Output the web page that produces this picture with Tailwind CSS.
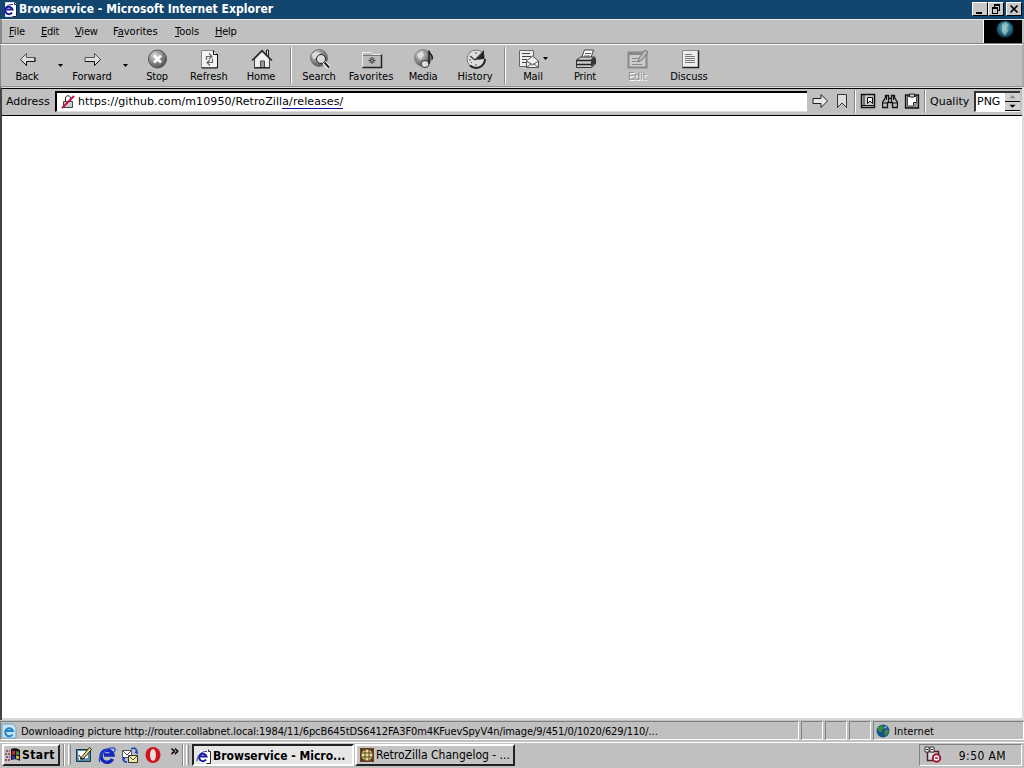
<!DOCTYPE html>
<html lang="en">
<head>
  <meta charset="UTF-8" />
  <meta name="viewport" content="width=device-width, initial-scale=1.0"/>
  <title>Browservice - Microsoft Internet Explorer</title>
  <script src="https://cdn.jsdelivr.net/npm/@tailwindcss/browser@4"></script>
</head>

<body class="w-[1024px] h-[768px] overflow-hidden flex flex-col bg-[#c0c0c0] text-black text-[11px] leading-[13px] whitespace-nowrap font-['DejaVu_Sans_Condensed','DejaVu_Sans',sans-serif]">

  <!-- shared icons -->
  <svg class="absolute w-0 h-0">
    <defs>
      <radialGradient id="ball" cx=".35" cy=".3" r=".8"><stop offset="0" stop-color="#ddd"/><stop offset=".4" stop-color="#999"/><stop offset="1" stop-color="#444"/></radialGradient>
      <radialGradient id="earth" cx=".5" cy=".4" r=".6"><stop offset="0" stop-color="#7cc4d8"/><stop offset=".5" stop-color="#2d7796"/><stop offset="1" stop-color="#0a2436"/></radialGradient>
    </defs>
    <symbol id="ie-page" viewBox="0 0 16 16">
      <path d="M3.500 1.500h9l2 2v12h-11z" fill="#fff" stroke="#dde"/>
      <path d="M12.500 1.500v2h2v12h-4" fill="none" stroke="#223"/>
      <path d="M10 11.500a3.700 3.700 0 1 1 .5-3H4.500" fill="none" stroke="#1c1c9c" stroke-width="2"/>
      <path d="M1 13C1 8 5 3 11 3.500" fill="none" stroke="#2233a8"/>
    </symbol>
    <symbol id="arrow" viewBox="0 0 16 14">
      <path d="M1 4.500h8v-4l6.500 6.500L9 13.500v-4H1z" fill="#e8e8e8" stroke="#222"/>
    </symbol>
  </svg>

  <!-- title bar -->
  <header class="h-[19px] shrink-0 flex items-center bg-[#12466f] text-white pl-[2px] pr-[2px] pb-px">
    <svg class="w-4 h-4"><use href="#ie-page"/></svg>
    <span class="ml-px pt-px text-[12px] font-bold tracking-[0.05px]">Browservice - Microsoft Internet Explorer</span>
    <div class="ml-auto flex text-black">
      <div class="w-4 h-3.5 bg-[#c8c8c8] border border-t-white border-l-white border-r-black border-b-black">
        <svg class="w-3.5 h-3" viewBox="0 0 14 12"><path d="M3 9h6v2H3z"/></svg>
      </div>
      <div class="w-4 h-3.5 bg-[#c8c8c8] border border-t-white border-l-white border-r-black border-b-black">
        <svg class="w-3.5 h-3" viewBox="0 0 14 12"><path d="M5 1h6v2H5zM3 4h6v2H3zM5 3h1v1H5zM10 3h1v5h-1zM9 7h1v1H9zM3 6h1v5H3zM8 6h1v5H8zM4 10h4v1H4z"/></svg>
      </div>
      <div class="ml-[2px] w-4 h-3.5 bg-[#c8c8c8] border border-t-white border-l-white border-r-black border-b-black">
        <svg class="w-3.5 h-3" viewBox="0 0 14 12"><path d="M3.500 2.500l7 7M10.500 2.500l-7 7" stroke="#000" stroke-width="1.700"/></svg>
      </div>
    </div>
  </header>

  <!-- menu bar -->
  <nav class="h-[25px] shrink-0 flex border-t border-t-[#e8e8e8] border-b border-b-[#808080] border-l-2 border-l-[#888] pr-[2px]">
    <div class="flex pt-[5px] pl-[7px]">
      <span class="w-[32px] tracking-[-0.1px]"><u>F</u>ile</span>
      <span class="w-[34px] tracking-[-0.3px]"><u>E</u>dit</span>
      <span class="w-[38px] tracking-[-0.2px]"><u>V</u>iew</span>
      <span class="w-[62px]">F<u>a</u>vorites</span>
      <span class="w-[40px]"><u>T</u>ools</span>
      <span class="tracking-[-0.3px]"><u>H</u>elp</span>
    </div>
    <div class="ml-auto w-[39px] h-[23px] bg-black border-l border-white flex justify-center">
      <svg class="w-6 h-[22px] ml-1" viewBox="0 0 24 22"><circle cx="12" cy="9.500" r="8.500" fill="url(#earth)"/><path d="M9 4l4-2 3 3-3 3 2 3-3 5-3-4z" fill="#c4dcc0" opacity=".55"/></svg>
    </div>
  </nav>

  <!-- standard buttons -->
  <div class="h-[43px] shrink-0 flex border-t border-t-white border-b border-b-[#909090] border-l border-l-[#888] border-r-2 border-r-[#aaa] [&>div]:w-[52px] [&>div]:flex [&>div]:flex-col [&>div]:items-center [&>div]:pt-[3px] [&>div>svg]:w-6 [&>div>svg]:h-[22px] [&>i]:w-[13px] [&>i]:pt-[19px] [&>i]:pl-[5px]">
    <div><svg viewBox="0 0 24 22"><path d="M5.500 11.500l6-6v4H20v4h-8.500v4z" fill="#ddd" stroke="#555"/><path d="M5.500 11.500l6 6v-4H20v-4" fill="none" stroke="#111"/></svg><span class="tracking-[-0.3px]">Back</span></div>
    <i><svg class="w-[5px] h-[3px]" viewBox="0 0 5 3"><path d="M0 0h5L2.500 3z"/></svg></i>
    <div><svg viewBox="0 0 24 22"><path d="M20.500 11.500l-6-6v4H5v4h9.500v4z" fill="#ddd" stroke="#555"/><path d="M20.500 11.500l-6 6v-4H5" fill="none" stroke="#111"/></svg><span>Forward</span></div>
    <i><svg class="w-[5px] h-[3px]" viewBox="0 0 5 3"><path d="M0 0h5L2.500 3z"/></svg></i>
    <div><svg viewBox="0 0 24 22"><circle cx="12.500" cy="11" r="9" fill="url(#ball)" stroke="#555"/><path d="M9 7.500l7 7M16 7.500l-7 7" stroke="#fff" stroke-width="2.500"/></svg><span class="tracking-[-0.2px]">Stop</span></div>
    <div><svg viewBox="0 0 24 22"><path d="M4.500 2.500h12l4 4v13h-16z" fill="#f4f4f4" stroke="#888"/><path d="M20.500 6v14h-16M16.500 2.500v4h4" fill="none" stroke="#111"/><path d="M9.500 12V8.500h5M12 5.500l3 3-3 2.500M15.500 10.500v4h-5M13 12l-3 2.500 3 3" fill="none" stroke="#666" stroke-width="1.200"/></svg><span class="tracking-[0.1px]">Refresh</span></div>
    <div><svg viewBox="0 0 24 22"><path d="M5.500 11v8.500h15V11L13 3.500z" fill="#eee" stroke="#444"/><path d="M17.500 7V2h2v7" fill="#ddd" stroke="#222"/><path d="M3 12.500L13 2.500l10 10" fill="none" stroke="#222" stroke-width="1.300"/><path d="M11.500 19v-6h4v6" fill="#999" stroke="#444"/><path d="M5 20h16" stroke="#111"/></svg><span class="tracking-[-0.2px]">Home</span></div>
    <b class="w-[6px] pl-[3px] py-[2px]"><b class="block w-[2px] h-full bg-[#888] border-r border-white"></b></b>
    <div><svg viewBox="0 0 24 22"><circle cx="12" cy="10" r="8.500" fill="url(#ball)" stroke="#777"/><path d="M5 6l4-2 4 1-2 4-5 2z" fill="#ddd"/><circle cx="14" cy="11" r="4.500" fill="#ddd" stroke="#222"/><path d="M17 14.500l5 5" stroke="#fff" stroke-width="4"/><path d="M17.500 14.500l4.500 5" stroke="#222" stroke-width="2"/></svg><span class="tracking-[-0.1px]">Search</span></div>
    <div><svg viewBox="0 0 24 22"><path d="M3.500 19.500V4.500h8l2 2h9v13z" fill="#bbb" stroke="#eee"/><path d="M4 7.500h18" stroke="#777"/><path d="M22.500 6.500v13h-19" fill="none" stroke="#222" stroke-width="1.500"/><path d="M13 9v7M9.500 12.500h7M10.500 10l5 5M15.500 10l-5 5" stroke="#333"/><path d="M12.500 12h1v1h-1z" fill="#fff"/></svg><span>Favorites</span></div>
    <div><svg viewBox="0 0 24 22"><circle cx="12" cy="10" r="8.500" fill="url(#ball)" stroke="#888"/><path d="M6 7l5-4 2 4-4 5z" fill="#ddd"/><ellipse cx="14" cy="16" rx="4" ry="3.500" fill="#ddd" stroke="#333"/><path d="M18 16V2.500c0 4 5 4 3 9" fill="none" stroke="#222" stroke-width="1.500"/></svg><span class="tracking-[-0.2px]">Media</span></div>
    <div><svg viewBox="0 0 24 22"><circle cx="13" cy="11" r="9" fill="#ddd" stroke="#777"/><path d="M22 11a9 9 0 0 1-15 6.500" fill="none" stroke="#222" stroke-width="2"/><path d="M12 12L21 2v9z" fill="#222"/><path d="M12 12L7 8M12 12l7-7" stroke="#444" stroke-width="1.500"/><path d="M13 4v2M6 12h2M13 16v2M8 15l1-1" stroke="#555"/></svg><span>History</span></div>
    <b class="w-[6px] pl-[3px] py-[2px]"><b class="block w-[2px] h-full bg-[#888] border-r border-white"></b></b>
    <div class="relative"><svg class="-ml-2" viewBox="0 0 24 22"><path d="M2.500 2.500h14v16h-14z" fill="#eee" stroke="#666"/><path d="M5 5.500h8M5 8.500h9M5 11.500h5M5 14.500h4" stroke="#444"/><path d="M9.500 13l6-5 6 5v6.500h-12z" fill="#eee" stroke="#555"/><path d="M9.500 13l6 4 6-4M9.500 19.500l5-4M21.500 19.500l-5-4" fill="none" stroke="#555"/></svg><span class="tracking-[-0.1px]">Mail</span>
      <em class="absolute left-[36px] top-[12px]"><svg class="w-[5px] h-[3px]" viewBox="0 0 5 3"><path d="M0 0h5L2.500 3z"/></svg></em></div>
    <div><svg viewBox="0 0 24 22"><path d="M8.500 10l3-8h9l-3 9z" fill="#fff" stroke="#444"/><path d="M12 5.500h6M11 8h6" stroke="#555"/><path d="M3.500 12l4-3h14l1 2v5l-4 3.500h-15z" fill="#ccc" stroke="#333"/><path d="M3.500 12.500h14l4-3M4 16.500h14" fill="none" stroke="#222" stroke-width="1.500"/><path d="M18 13l4-3v5.500L18 19z" fill="#333"/></svg><span class="tracking-[-0.1px]">Print</span></div>
    <div class="text-[#929292] [text-shadow:1px_1px_0_#fff]"><svg viewBox="0 0 24 22"><path d="M3.500 4.500h18v15h-18z" fill="#ccc" stroke="#888" stroke-width="2"/><path d="M4 6h12" stroke="#888" stroke-width="2"/><path d="M7 10.500h6M7 13.500h8M7 16.500h10" stroke="#888"/><path d="M13 14l1-4 6-8 3 2-6 8z" fill="#bbb" stroke="#777"/></svg><span class="tracking-[-0.3px]">Edit</span></div>
    <div><svg viewBox="0 0 24 22"><path d="M5.500 2.500h16v17h-16z" fill="#eee" stroke="#888"/><path d="M21.500 2.500v17h-16" fill="none" stroke="#222" stroke-width="1.500"/><path d="M8 6.500h7M8 8.500h10M8 10.500h10M8 12.500h10M8 14.500h10" stroke="#777"/></svg><span>Discuss</span></div>
  </div>

  <!-- address row drawn by the page -->
  <main class="h-[633px] shrink-0 flex flex-col border-t border-t-[#ddd] border-l-2 border-l-[#444] border-r-2 border-r-[#ddd] bg-white">
    <div class="h-[28px] shrink-0 flex items-center pb-[2px] border-t border-t-black border-b border-b-black bg-[#c0c0c0] font-['DejaVu_Sans',sans-serif]">
      <span class="w-[53px] pl-[4px]">Address</span>
      <div class="w-[752px] h-[21px] bg-white border-t-2 border-l-2 border-t-black border-l-black border-b border-b-[#ddd] flex items-center pl-[3px]">
        <svg class="w-4 h-4" viewBox="0 0 16 16"><path d="M5.500 7V4c0-3 5-3 5 0v3" fill="none" stroke="#222"/><path d="M3.500 7.500h9v6h-9z" fill="#ccc" stroke="#444"/><path d="M2 14L14 2" stroke="#c01848" stroke-width="2"/></svg>
        <span class="ml-[2px] tracking-[0.1px]">https://github.com/m10950/RetroZill<span class="border-b border-b-[#1010a0]">a/releases/</span></span>
      </div>
      <svg class="w-4 h-3.5 ml-[5px]"><use href="#arrow"/></svg>
      <svg class="w-3 h-4 ml-2" viewBox="0 0 12 16"><path d="M1.500 1.500h9v13L6 10l-4.500 4.500z" fill="#ddd" stroke="#333"/></svg>
      <i class="ml-1.5 w-[2px] h-[23px] bg-[#888] border-r border-white"></i>
      <svg class="w-4 h-4 ml-1" viewBox="0 0 16 16"><path d="M1.500 1.500h13v13h-13z" fill="#ccc" stroke="#111" stroke-width="1.500"/><path d="M4 2v10M2 12.500h12" stroke="#111"/><path d="M7.500 4.500h5v6L10 8l-2.500 2.500z" fill="#eee" stroke="#111"/></svg>
      <svg class="w-4 h-4 ml-1.5" viewBox="0 0 16 16"><path d="M.5 14.500v-5l3-5V2.500h3v3h3v-3h3v2l3 5v5h-5v-5h-5v5z" fill="#bbb" stroke="#111" stroke-width="1.300"/><path d="M6.500 4v5M9.500 4v5M1 10h4M11 10h4M4.500 3v4M11.500 3v4" stroke="#111"/></svg>
      <svg class="w-4 h-4 ml-1.5" viewBox="0 0 16 16"><path d="M1.500 2h13v13h-13z" fill="#999" stroke="#111" stroke-width="1.300"/><path d="M3.500 3.500h9v6l-3 3.500h-6z" fill="#fff" stroke="#444"/><path d="M12.500 9.500h-3v3M5.500 1h5v3h-5z" fill="#ccc" stroke="#222"/></svg>
      <i class="ml-1 w-[2px] h-[23px] bg-[#888] border-r border-white"></i>
      <span class="ml-1">Quality</span>
      <div class="ml-auto mr-[2px] w-[46px] h-[21px] bg-white border-t-2 border-l-2 border-t-[#333] border-l-[#333] border-b border-b-white flex items-center justify-between pl-[1px]">
        <span>PNG</span>
        <div class="w-[15px] flex flex-col">
          <svg class="h-[9px] bg-[#d0d0d0] border-b border-black" viewBox="0 0 15 9"><path d="M4 6h7L7.500 2.500z" fill="#888"/></svg>
          <svg class="h-[9px] bg-[#d0d0d0] border-b border-black" viewBox="0 0 15 9"><path d="M4 3h7L7.500 6.500z"/></svg>
        </div>
      </div>
    </div>
    <div class="flex-1"></div>
    <div class="h-[2px] bg-[#d8d8d8]"></div>
  </main>

  <!-- status bar -->
  <footer class="h-[22px] shrink-0 flex items-center gap-[2px] pt-px pb-[2px] [&>div]:h-full [&>div]:border [&>div]:border-t-[#808080] [&>div]:border-l-[#808080] [&>div]:border-r-white [&>div]:border-b-white">
    <div class="w-[799px] flex items-center">
      <svg class="w-4 h-4" viewBox="0 0 16 16"><path d="M1 1h11l3 3v11H1z" fill="#c8e4f4" stroke="#6ba2c8"/><path d="M11.500 11.500a4 4 0 1 1 .5-3.500H5" fill="none" stroke="#2585c4" stroke-width="2"/></svg>
      <span class="ml-[4px] pt-px tracking-[-0.1px]">Downloading picture http://router.collabnet.local:1984/11/6pcB645tDS6412FA3F0m4KFuevSpyV4n/image/9/451/0/1020/629/110/...</span>
    </div>
    <div class="w-[22px]"></div>
    <div class="w-[22px]"></div>
    <div class="w-[22px]"></div>
    <div class="flex-1 flex items-center pl-px">
      <svg class="w-4 h-4" viewBox="0 0 16 16"><circle cx="8" cy="8" r="6.500" fill="#174f90"/><path d="M3 4l4-2 2 3-3 4-3-1zM9 8l4-2 1 4-4 3z" fill="#3b8d38"/><path d="M9 3l3 1-2 2z" fill="#8acce0"/></svg>
      <span class="ml-[3px] pt-px tracking-[0.1px]">Internet</span>
    </div>
  </footer>

  <!-- taskbar -->
  <div class="h-[27px] shrink-0 flex items-center border-t border-white pb-[2px]">
    <div class="ml-[2px] w-[58px] h-[22px] flex items-center bg-[#c4c4c4] border-2 border-t-white border-l-white border-r-[#222] border-b-[#222]">
      <svg class="w-4 h-4 ml-px" viewBox="0 0 16 16"><path d="M6 2c3-1 6-1 9 1v11c-3-2-6-2-9-1z" fill="#111"/><path d="M7 4l3-.5v4L7 8z" fill="#c32b2b"/><path d="M11 4l3 .7v3.500L11 7.500z" fill="#3d8b42"/><path d="M7 9l3-.5v3.500l-3 .5z" fill="#2834b0"/><path d="M11 8.500l3 .7v3l-3-.7z" fill="#d1ba38"/><path d="M1 4h2M4 4h1M0 7h2M3 7h2M1 10h2M4 10h1M0 13h2M3 13h2" stroke="#912c50" stroke-width="1.500"/></svg>
      <span class="ml-px pt-px font-bold text-[12px] tracking-[0.4px]">Start</span>
    </div>
    <i class="ml-[3px] w-[2px] h-[22px] bg-[#888] border-r border-white"></i>
    <i class="ml-[3px] w-[3px] h-[20px] bg-[#ccc] border-l border-l-white border-r border-r-[#888]"></i>
    <svg class="ml-[4px] w-[18px] h-[18px]" viewBox="0 0 18 18"><path d="M1.500 3.500h14v12h-14z" fill="#4d90ad" stroke="#234"/><path d="M3 5h9l1 7-9 2z" fill="#fff"/><path d="M5 13L14.500 1.500l2 2L8 13z" fill="#f1dc73" stroke="#222"/><path d="M4 9l3 4 3-1" fill="none" stroke="#111"/></svg>
    <svg class="ml-[5px] w-[18px] h-[18px]" viewBox="0 0 18 18"><path d="M14.500 13a6 6 0 1 1 .5-4H6" fill="none" stroke="#1226b8" stroke-width="3.400"/><path d="M2 16C-1 12 8 1 16 2c2 1 1 3 0 4" fill="none" stroke="#2b4cd4" stroke-width="1.300"/></svg>
    <svg class="ml-[5px] w-[18px] h-[18px]" viewBox="0 0 18 18"><path d="M1.500 4.500h9v7h-9z" fill="#fff" stroke="#555"/><path d="M2 5l4 4 4-4" fill="none" stroke="#555"/><path d="M7.500 9.500h9v7h-9z" fill="#f4e9a0" stroke="#333"/><path d="M8 10l4 4 4-4" fill="none" stroke="#555"/><path d="M10 3c4-2 6 0 6 4l-2-1M6 16c-3 0-4-1-4-4l2 1" fill="none" stroke="#2448c8" stroke-width="1.800"/></svg>
    <svg class="ml-[5px] w-[18px] h-[18px]" viewBox="0 0 18 18"><ellipse cx="9" cy="9" rx="7.500" ry="8" fill="#d0141c"/><ellipse cx="9" cy="9" rx="3" ry="6" fill="#eedcdc"/></svg>
    <span class="ml-[8px] mb-[9px] text-[16px] leading-[13px] w-[10px] font-bold">»</span>
    <i class="ml-[2px] w-[2px] h-[22px] bg-[#888] border-r border-white"></i>
    <i class="ml-[2px] w-[3px] h-[20px] bg-[#ccc] border-l border-l-white border-r border-r-[#888]"></i>
    <div class="ml-[3px] w-[162px] h-[22px] flex items-center bg-[#e6e6e6] border-2 border-t-[#222] border-l-[#222] border-r-white border-b-white pl-[2px] pt-[2px]">
      <svg class="w-4 h-4"><use href="#ie-page"/></svg>
      <span class="ml-px pt-px font-bold text-[12px]">Browservice - Micro...</span>
    </div>
    <div class="ml-px w-[160px] h-[22px] flex items-center bg-[#c4c4c4] border-2 border-t-white border-l-white border-r-[#222] border-b-[#222] pl-[2px]">
      <svg class="w-4 h-4" viewBox="0 0 16 16"><path d="M1 1h14v14H1z" fill="#7d3b24"/><path d="M1 1l3 2 4-2 4 2 3-2-2 4 2 3-2 4 2 3-4-2-3 2-4-2-3 2 2-4-2-3 2-4z" fill="#443925"/><circle cx="8" cy="8" r="5.500" fill="#e8dc91"/><path d="M3 6h10M3 10h10M6 3v10M10 3v10" stroke="#554725"/></svg>
      <span class="ml-px pt-px text-[12px]">RetroZilla Changelog - ...</span>
    </div>
    <div class="ml-auto mr-[2px] w-[103px] h-[22px] flex items-center border border-t-[#808080] border-l-[#808080] border-r-white border-b-white pl-[4px]">
      <svg class="w-[18px] h-[18px]" viewBox="0 0 18 18"><path d="M3.500 5.500h11v9h-11z" fill="#ddd" stroke="#501828" stroke-width="1.500"/><path d="M1 1h4v5H1zM6 1h4v5H6z" fill="#fff" stroke="#333"/><path d="M2 3.500h2M7 3.500h2" stroke="#222"/><circle cx="12.500" cy="12" r="3.700" fill="#fff" stroke="#a01830" stroke-width="2"/><path d="M11 12h3" stroke="#a01830" stroke-width="1.500"/></svg>
      <span class="ml-auto mr-[15px] pt-[3px] text-[12px] tracking-[0.4px]">9:50 AM</span>
    </div>
  </div>
</body>
</html>
